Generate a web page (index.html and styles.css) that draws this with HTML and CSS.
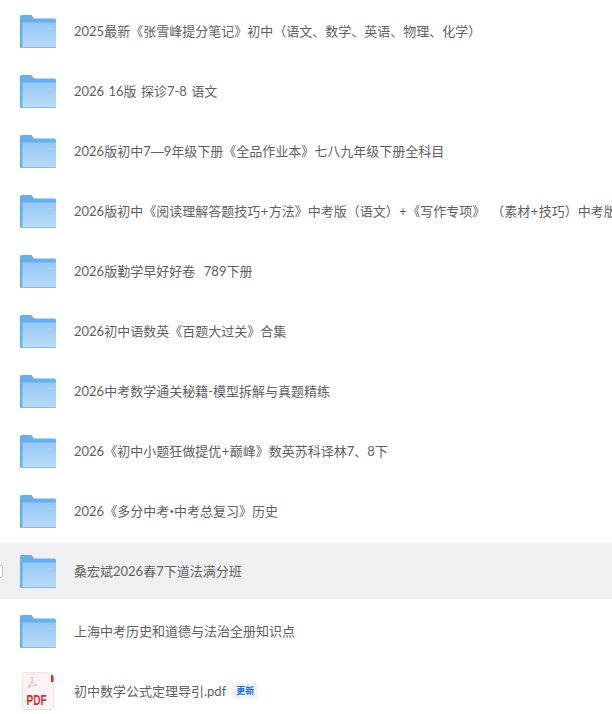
FILE: index.html
```html
<!DOCTYPE html>
<html lang="en">

<head>
	<meta charset="UTF-8">
	<meta name="viewport" content="width=device-width, initial-scale=1.0">
	<title>文件列表</title>
	<link rel="stylesheet" href="styles.css">
</head>

<body>
	<svg class="icon-defs" width="0" height="0" aria-hidden="true">
		<defs>
			<linearGradient id="folder-front" x1="0" y1="0" x2="0" y2="1">
				<stop offset="0" stop-color="#93c8f5" />
				<stop offset="1" stop-color="#bddcf8" />
			</linearGradient>
			<symbol id="folder" viewBox="0 0 36 33">
				<path d="M0 1.5Q0 0 1.5 0H11.500L14 3.500H34.500Q36 3.500 36 5V33H0Z" fill="#66b0ee" />
				<path d="M2.500 7.500H36V33H2.500Z" fill="url(#folder-front)" />
				<path d="M0 32H36V33H0Z" fill="#85bcef" />
				<path d="M28 13H34V13.800H28Z" fill="#add3f6" />
			</symbol>
		</defs>
	</svg>

	<ul class="file-list">
		<li class="file-row">
			<svg class="folder-icon"><use href="#folder" /></svg>
			<span class="file-name">2025最新《张雪峰提分笔记》初中（语文、数学、英语、物理、化学）</span>
		</li>
		<li class="file-row">
			<svg class="folder-icon"><use href="#folder" /></svg>
			<span class="file-name">2026 16版 探诊7-8 语文</span>
		</li>
		<li class="file-row">
			<svg class="folder-icon"><use href="#folder" /></svg>
			<span class="file-name">2026版初中7<span class="dash">—</span>9年级下册《全品作业本》七八九年级下册全科目</span>
		</li>
		<li class="file-row">
			<svg class="folder-icon"><use href="#folder" /></svg>
			<span class="file-name">2026版初中《阅读理解答题技巧<span class="plus">+</span>方法》中考版（语文）<span class="plus">+</span>《写作专项》<span class="gap"></span>（素材<span class="plus">+</span>技巧）中考版</span>
		</li>
		<li class="file-row">
			<svg class="folder-icon"><use href="#folder" /></svg>
			<span class="file-name">2026版勤学早好好卷&nbsp;&nbsp;789下册</span>
		</li>
		<li class="file-row">
			<svg class="folder-icon"><use href="#folder" /></svg>
			<span class="file-name">2026初中语数英《百题大过关》合集</span>
		</li>
		<li class="file-row">
			<svg class="folder-icon"><use href="#folder" /></svg>
			<span class="file-name">2026中考数学通关秘籍-模型拆解与真题精练</span>
		</li>
		<li class="file-row">
			<svg class="folder-icon"><use href="#folder" /></svg>
			<span class="file-name">2026《初中小题狂做提优<span class="plus">+</span>巅峰》数英苏科译林7、8下</span>
		</li>
		<li class="file-row">
			<svg class="folder-icon"><use href="#folder" /></svg>
			<span class="file-name">2026《多分中考<span class="dot">•</span>中考总复习》历史</span>
		</li>
		<li class="file-row active">
			<span class="row-check"></span>
			<svg class="folder-icon"><use href="#folder" /></svg>
			<span class="file-name">桑宏斌2026春7下道法满分班</span>
		</li>
		<li class="file-row">
			<svg class="folder-icon"><use href="#folder" /></svg>
			<span class="file-name">上海中考历史和道德与法治全册知识点</span>
		</li>
		<li class="file-row">
			<svg class="pdf-icon" viewBox="0 0 32 38">
				<path d="M3 .5H26L31.500 5V35Q31.500 37.500 29 37.500H3Q.5 37.500 .5 35V3Q.5 .5 3 .5Z" fill="#fdf3f3" stroke="#f5dfdf" />
				<path d="M29 2.500Q31 2.500 31.500 4.500V9.500Q30 10.500 29 9.500Z" fill="#c8323c" />
				<path d="M5.500 16Q9 13 10.500 8Q11 5 9.500 5.500Q9 7 11 10.500Q12.500 12.500 15.500 13Q12 13 9.500 14Q7 15 5.500 16Z" fill="none" stroke="#f2c3c3" stroke-width="1.200" />
				<text class="pdf-label" x="4.500" y="33" textLength="20" lengthAdjust="spacingAndGlyphs">PDF</text>
			</svg>
			<span class="file-name">初中数学公式定理导引.pdf</span>
			<span class="file-tag">更新</span>
		</li>
	</ul>
</body>

</html>
```

FILE: styles.css
```css
* {
	margin: 0;
	padding: 0;
	box-sizing: border-box;
}

html,
body {
	height: 100%;
	overflow: hidden;
}

body {
	background-color: #ffffff;
	font-family: 'Lato', 'Noto Sans CJK SC', sans-serif;
}

.icon-defs {
	position: absolute;
}

.file-list {
	display: flex;
	flex-direction: column;
	gap: 4px;
	padding-top: 3px;
	list-style: none;
}

.file-row {
	position: relative;
	display: flex;
	align-items: center;
	flex-shrink: 0;
	height: 56px;
	padding-left: 20px;
	white-space: nowrap;
}

.file-row.active {
	background-color: #f0f0f3;
}

.row-check {
	position: absolute;
	left: -10px;
	top: 22px;
	width: 13px;
	height: 13px;
	background-color: #ffffff;
	border: 1px solid #c4c4c8;
	border-radius: 2px;
}

.folder-icon {
	flex-shrink: 0;
	width: 36px;
	height: 33px;
	margin-right: 18px;
}

.pdf-icon {
	flex-shrink: 0;
	width: 32px;
	height: 38px;
	margin: 0 20px 0 2px;
}

.pdf-label {
	fill: #c8323c;
	font-family: 'Liberation Sans', sans-serif;
	font-size: 14px;
	font-weight: 700;
}

.file-name {
	padding-bottom: 2px;
	color: #616161;
	font-size: 13px;
	font-kerning: none;
	text-spacing-trim: space-all;
	word-spacing: 1px;
}

.dash {
	font-family: 'Liberation Sans', sans-serif;
}

.plus {
	margin: 0 0.5px;
}

.dot {
	font-family: 'Open Sans', sans-serif;
}

.gap {
	display: inline-block;
	width: 6px;
}

.file-tag {
	margin-left: 6px;
	padding: 2px 4px;
	background-color: #eef5ff;
	border-radius: 3px;
	color: #2468f2;
	font-size: 9px;
	font-weight: 700;
	line-height: 12px;
}
```
